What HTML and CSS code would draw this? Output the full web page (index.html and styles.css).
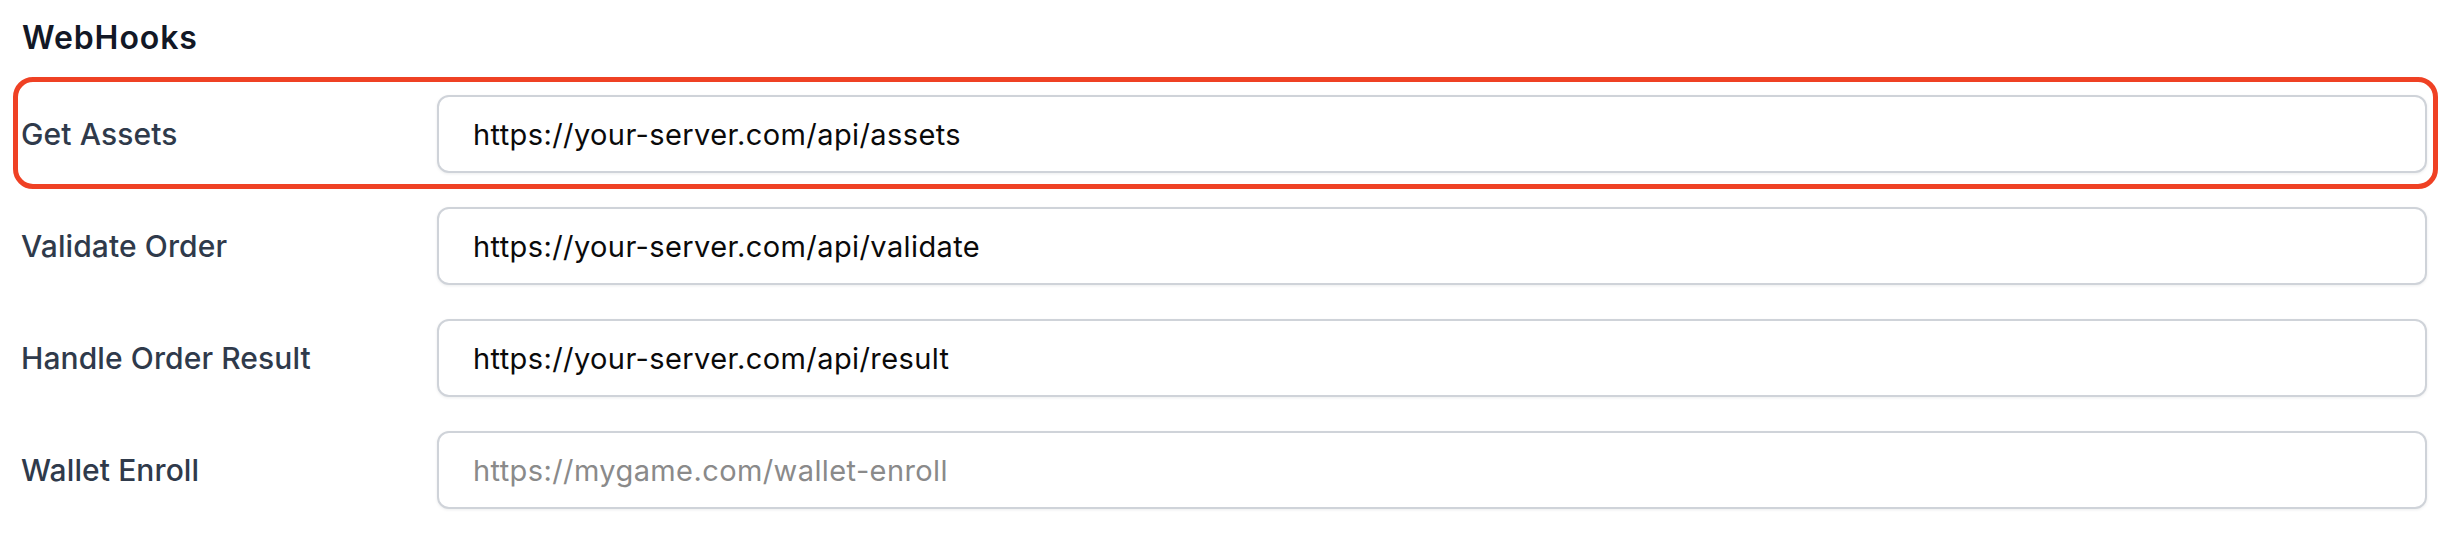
FILE: index.html
```html
<!DOCTYPE html>
<html lang="en">
<head>
<meta charset="utf-8">
<title>WebHooks</title>
<link rel="stylesheet" href="styles.css">
</head>
<body>
<section class="webhooks">
  <h2 class="title">WebHooks</h2>
  <div class="rows">
    <div class="row row-highlight">
      <label class="label" for="get-assets">Get Assets</label>
      <input class="field" id="get-assets" type="text" value="https://your-server.com/api/assets">
    </div>
    <div class="row">
      <label class="label" for="validate-order">Validate Order</label>
      <input class="field" id="validate-order" type="text" value="https://your-server.com/api/validate">
    </div>
    <div class="row">
      <label class="label" for="handle-result">Handle Order Result</label>
      <input class="field" id="handle-result" type="text" value="https://your-server.com/api/result">
    </div>
    <div class="row">
      <label class="label" for="wallet-enroll">Wallet Enroll</label>
      <input class="field" id="wallet-enroll" type="text" placeholder="https://mygame.com/wallet-enroll">
    </div>
  </div>
</section>
</body>
</html>
```
FILE: styles.css
```css
* { box-sizing: border-box; }
html, body {
  margin: 0;
  padding: 0;
  background: #ffffff;
}
body {
  font-family: Inter, "Noto Sans", "Liberation Sans", sans-serif;
  width: 2450px;
  height: 534px;
  overflow: hidden;
}
.webhooks {
  padding: 20px 12px 0 13px;
}
.title {
  margin: 0 0 21px 9px;
  font-size: 32px;
  line-height: 36px;
  font-weight: 600;
  color: #121826;
  letter-spacing: 0.9px;
}
.rows {
  display: flex;
  flex-direction: column;
}
.row {
  display: flex;
  align-items: center;
  height: 112px;
  padding: 13px 6px 11px 3px;
  border: 5px solid transparent;
  border-radius: 20px;
}
.row-highlight {
  border-color: #ef4124;
}
.label {
  flex: 0 0 416px;
  font-size: 30px;
  font-weight: 500;
  color: #2f3a4b;
  letter-spacing: 0.1px;
}
.field {
  flex: 1 1 auto;
  height: 78px;
  padding: 0 34px;
  border: 2px solid #cfd3d9;
  border-radius: 12px;
  box-shadow: 0 1px 3px rgba(16, 24, 40, 0.08);
  font-family: Inter, "Noto Sans", "Liberation Sans", sans-serif;
  font-size: 29px;
  letter-spacing: 0.4px;
  color: #0a0a0a;
  background: #ffffff;
  outline: none;
}
.field::placeholder {
  color: #8a8a8a;
  opacity: 1;
}
```
